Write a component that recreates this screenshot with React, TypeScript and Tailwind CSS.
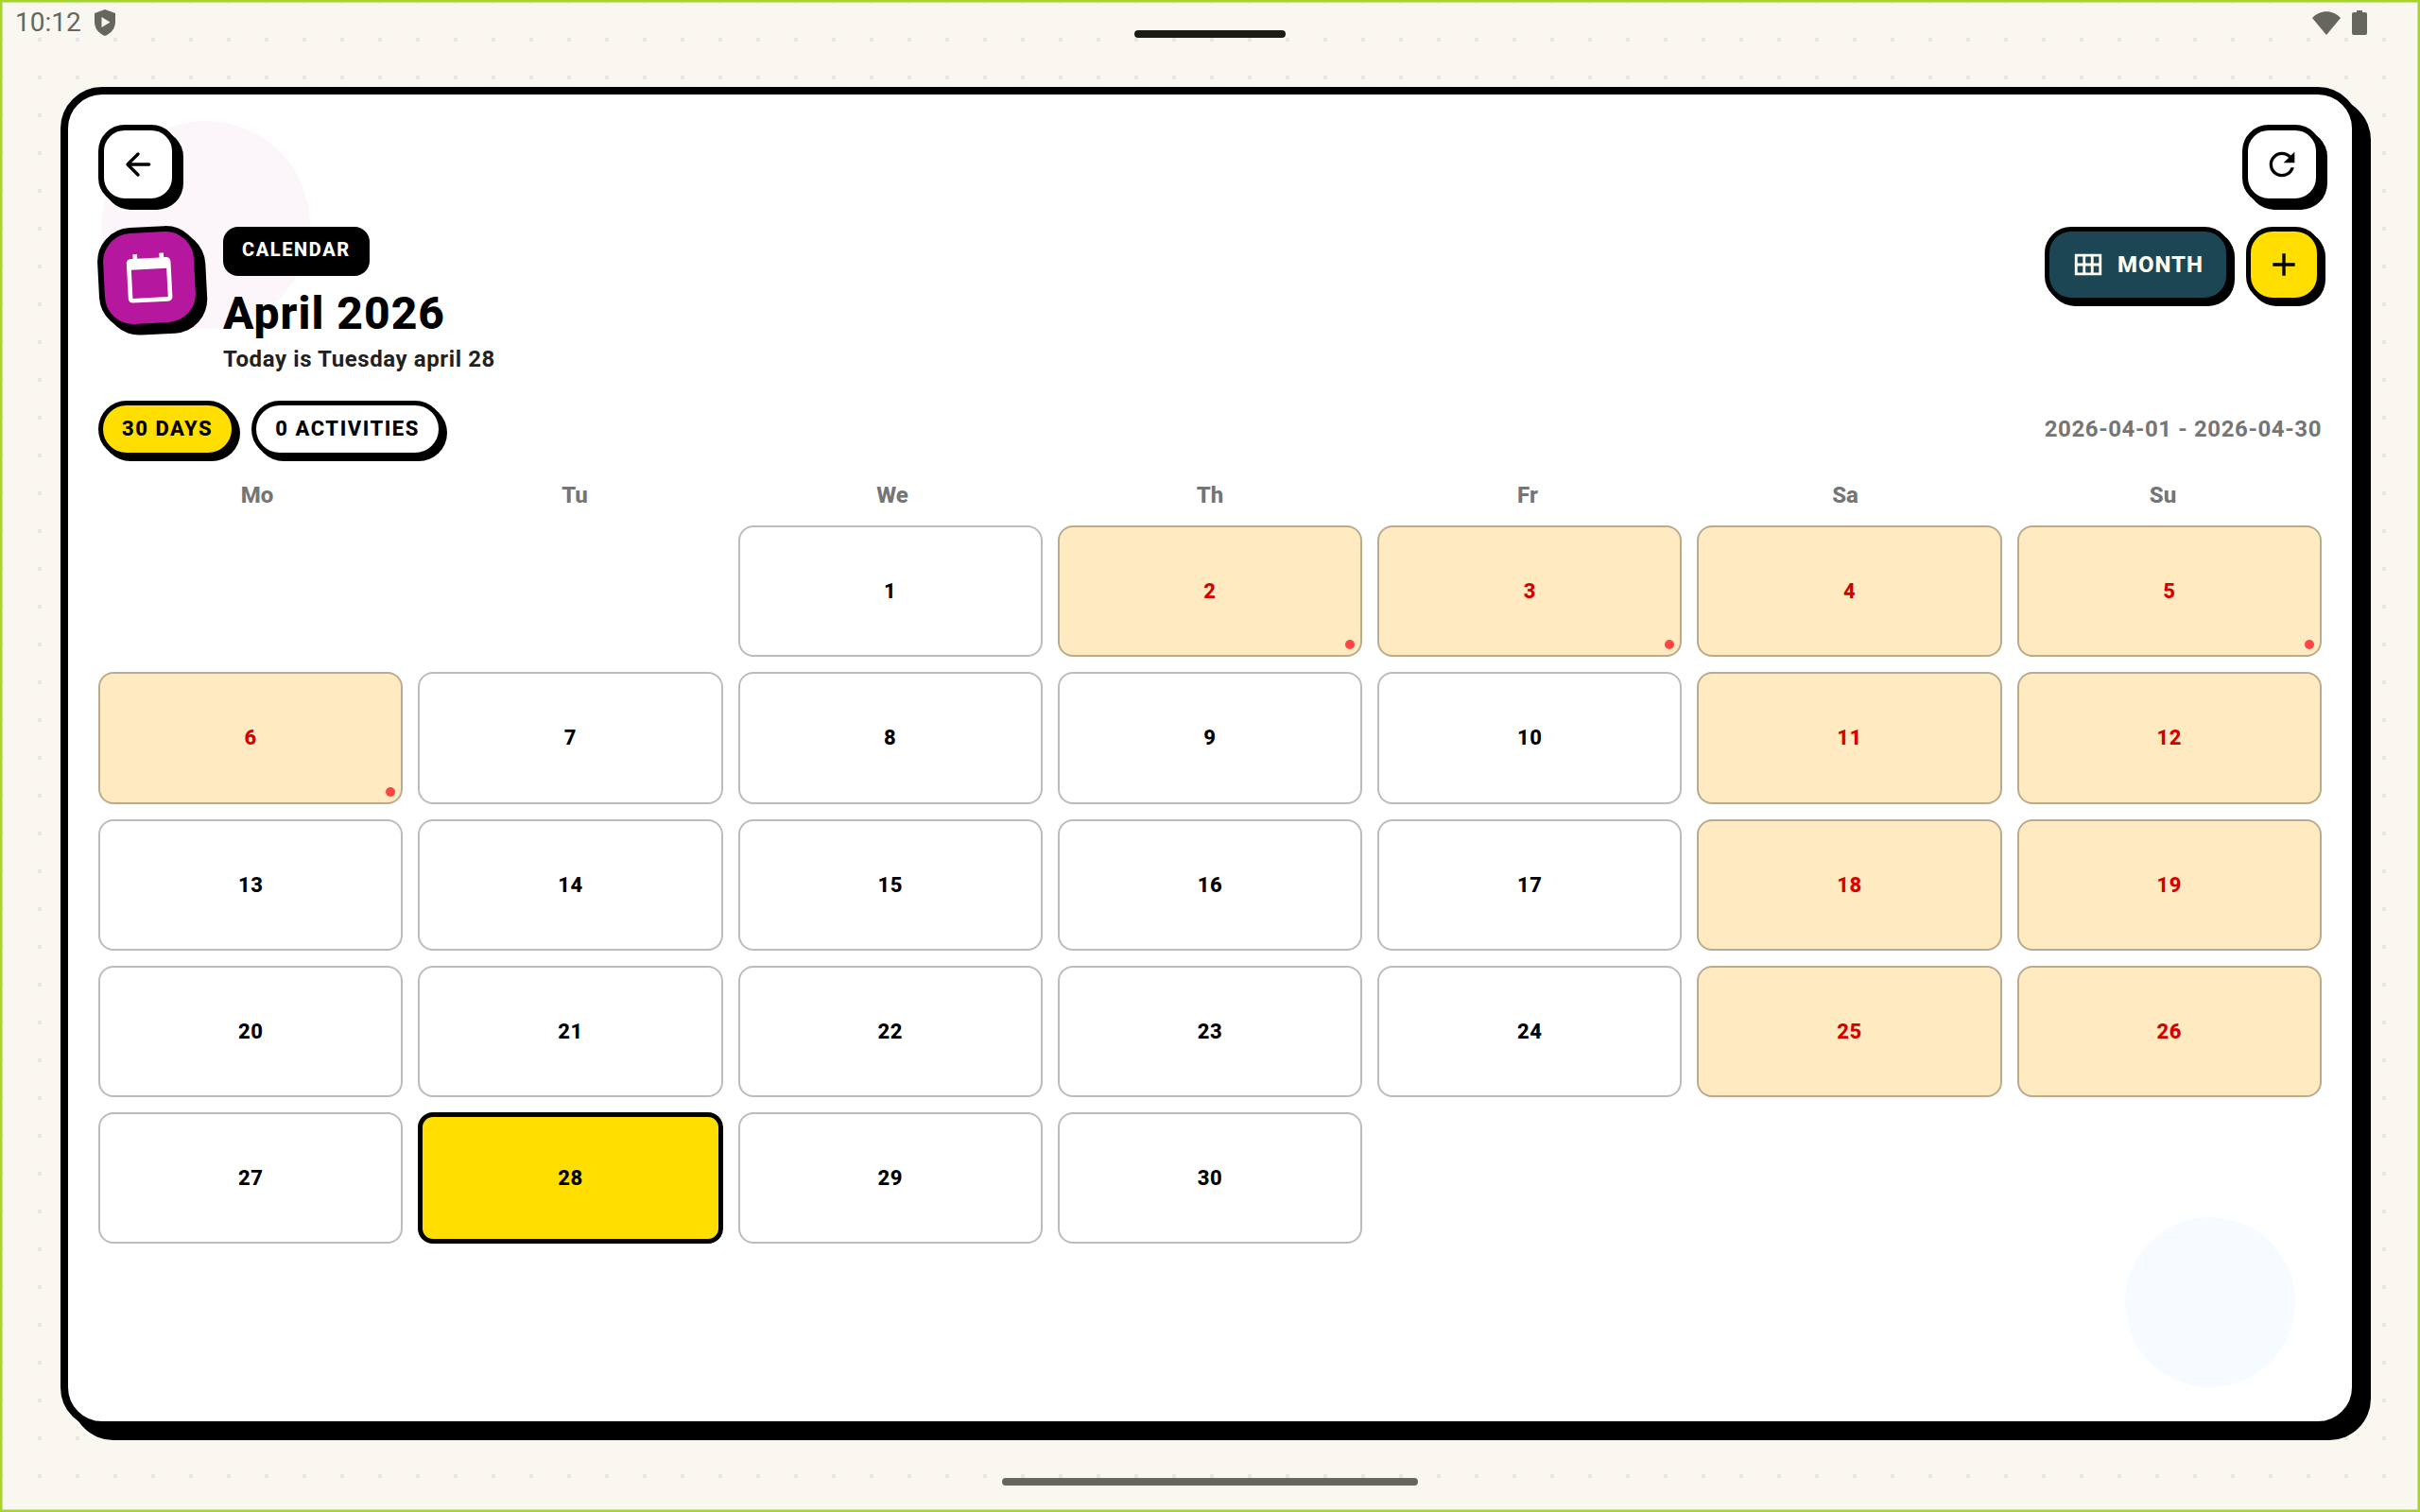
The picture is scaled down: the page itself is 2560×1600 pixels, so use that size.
import React from "react";

const weekdays = ["Mo", "Tu", "We", "Th", "Fr", "Sa", "Su"];
const daysOff = new Set([2, 3, 4, 5, 6, 11, 12, 18, 19, 25, 26]);
const marked = new Set([2, 3, 5, 6]);
const today = 28;
const leadingBlanks = 2;
const days = Array.from({ length: 30 }, (_, i) => i + 1);

function Icon({ d, className, viewBox = "0 0 24 24" }: { d: string; className: string; viewBox?: string }) {
  return (
    <svg viewBox={viewBox} fill="currentColor" fillRule="evenodd" aria-hidden="true" className={className}>
      <path d={d} />
    </svg>
  );
}

const icons = {
  back: "M19 11H7.83l4.88-4.88c.39-.39.39-1.03 0-1.42a.996.996 0 0 0-1.41 0l-6.59 6.59a.996.996 0 0 0 0 1.41l6.59 6.59a.996.996 0 1 0 1.41-1.41L7.83 13H19c.55 0 1-.45 1-1s-.45-1-1-1z",
  refresh:
    "M17.65 6.35A7.958 7.958 0 0 0 12 4c-4.42 0-7.99 3.58-7.99 8s3.57 8 7.99 8c3.73 0 6.84-2.55 7.73-6h-2.08A5.99 5.99 0 0 1 12 18c-3.31 0-6-2.69-6-6s2.69-6 6-6c1.66 0 3.14.69 4.22 1.78L13 11h7V4l-2.35 2.35z",
  add: "M19 13h-6v6h-2v-6H5v-2h6V5h2v6h6v2z",
  calendar:
    "M20 3h-1V1h-2v2H7V1H5v2H4c-1.1 0-2 .9-2 2v16c0 1.1.9 2 2 2h16c1.1 0 2-.9 2-2V5c0-1.1-.9-2-2-2zm0 18H4V8h16v13z",
  month: "M2 4v16h20V4H2zm6 7H4V6h4v5zm6 0h-4V6h4v5zm6 0h-4V6h4v5zM8 18H4v-5h4v5zm6 0h-4v-5h4v5zm6 0h-4v-5h4v5z",
  shield: "M11 0 0 4v9c0 7 4.500 12.500 11 15 6.500-2.500 11-8 11-15V4L11 0zM7.500 8l9 5.500-9 5.500V8z",
  wifi: "M0 7C8-2 22-2 30 7L15 25Z",
  battery: "M5 0h6v2h3a2 2 0 0 1 2 2v20a2 2 0 0 1-2 2H2a2 2 0 0 1-2-2V4a2 2 0 0 1 2-2h3V0z",
};

function DayCell({ day }: { day: number }) {
  const tone =
    day === today
      ? "border-5 border-black bg-[#ffde00] text-black"
      : daysOff.has(day)
        ? "border-2 border-[#bbab8d] bg-[#ffeac2] text-[#d50000]"
        : "border-2 border-[#bcbcbc] bg-white text-black";
  return (
    <button type="button" className={"relative flex aspect-[81/35] items-center justify-center rounded-2xl text-[22px] font-extrabold tracking-wide " + tone}>
      {day}
      {marked.has(day) && <span className="absolute right-1.5 bottom-1.5 size-2.5 rounded-full bg-[#ff4444]" />}
    </button>
  );
}

export default function App() {
  return (
    <div className="flex min-h-screen flex-col border-2 border-[#a6d52a] bg-[#faf7f0] bg-[conic-gradient(from_270deg_at_4px_4px,#e5e7eb_90deg,transparent_0)] bg-size-[40px_40px] bg-origin-border font-['Roboto',sans-serif] text-black inset-ring inset-ring-[#cfe396]">
      <header className="grid h-[90px] grid-cols-3 items-start px-3.5 pt-1.5 text-[#666560]">
        <div className="flex items-center gap-3.5">
          <time className="text-[28px] leading-8">10:12</time>
          <Icon d={icons.shield} viewBox="0 0 22 28" className="h-7 w-[22px]" />
        </div>
        <span className="mt-6 h-2 w-40 justify-self-center rounded-full bg-[#1c1c17]" />
        <div className="flex items-center gap-3 justify-self-end pt-[3px] pr-10">
          <Icon d={icons.wifi} viewBox="0 0 30 25" className="h-[25px] w-[30px]" />
          <Icon d={icons.battery} viewBox="0 0 16 26" className="h-[26px] w-4" />
        </div>
      </header>

      <main className="relative mx-[62px] flex flex-1 flex-col rounded-[44px] border-8 border-black bg-white p-8 shadow-[12px_12px_0_#000]">
        <span className="absolute top-7 left-9 size-[220px] rounded-full bg-[#fcf5fa]" />
        <span className="absolute right-[60px] bottom-9 size-[180px] rounded-full bg-[#f5fbfe]" />

        <div className="relative flex justify-between">
          <button type="button" aria-label="Back" className="flex size-[84px] items-center justify-center rounded-[28px] border-6 border-black bg-white shadow-[6px_6px_0_#000]">
            <Icon d={icons.back} className="size-10" />
          </button>
          <button type="button" aria-label="Refresh" className="flex size-[84px] items-center justify-center rounded-[28px] border-6 border-black bg-white shadow-[6px_6px_0_#000]">
            <Icon d={icons.refresh} className="size-10" />
          </button>
        </div>

        <section className="relative mt-6 flex items-start justify-between">
          <div className="flex items-start gap-6">
            <span className="flex size-[108px] -rotate-3 items-center justify-center rounded-[36px] border-6 border-black bg-[#b5179e] text-white shadow-[6px_6px_0_#000]">
              <Icon d={icons.calendar} className="size-14" />
            </span>
            <div className="flex flex-col items-start">
              <span className="rounded-2xl bg-black px-5 pt-2.5 pb-3.5 text-[20px] leading-7 font-extrabold tracking-[0.08em] text-white">CALENDAR</span>
              <h1 className="mt-3 text-[48px] leading-[56px] font-extrabold tracking-[1px]">April 2026</h1>
              <p className="mt-1 text-[24px] leading-8 font-bold tracking-wide text-[#212121]">Today is Tuesday april 28</p>
            </div>
          </div>
          <div className="flex gap-4">
            <button type="button" className="flex h-20 items-center gap-3.5 rounded-[28px] border-5 border-black bg-[#1d4654] px-6 text-[24px] font-extrabold tracking-[1px] text-[#fffdf0] shadow-[4px_4px_0_#000]">
              <Icon d={icons.month} className="size-[34px]" />
              MONTH
            </button>
            <button type="button" aria-label="Add" className="flex size-20 items-center justify-center rounded-[28px] border-5 border-black bg-[#ffde00] shadow-[4px_4px_0_#000]">
              <Icon d={icons.add} className="size-10" />
            </button>
          </div>
        </section>

        <section className="relative mt-7 flex items-center justify-between">
          <div className="flex gap-4 text-[22px] leading-[26px] font-extrabold tracking-[0.07em]">
            <span className="rounded-full border-5 border-black bg-[#ffde00] px-5 py-3 shadow-[4px_4px_0_#000]">30 DAYS</span>
            <span className="rounded-full border-5 border-black bg-white px-5 py-3 shadow-[4px_4px_0_#000]">0 ACTIVITIES</span>
          </div>
          <p className="text-[24px] font-bold tracking-wide text-[#757575]">2026-04-01 - 2026-04-30</p>
        </section>

        <div className="relative mt-6 grid grid-cols-7 text-center text-[24px] leading-8 font-extrabold text-[#757575]">
          {weekdays.map((name) => (
            <span key={name}>{name}</span>
          ))}
        </div>

        <div className="relative mt-4 grid grid-cols-7 gap-4">
          {Array.from({ length: leadingBlanks }, (_, i) => (
            <span key={"blank" + i} />
          ))}
          {days.map((day) => (
            <DayCell key={day} day={day} />
          ))}
        </div>
      </main>

      <footer className="flex h-[86px] items-end justify-center pb-[26px]">
        <span className="h-2 w-[440px] rounded-full bg-[#666560]" />
      </footer>
    </div>
  );
}
